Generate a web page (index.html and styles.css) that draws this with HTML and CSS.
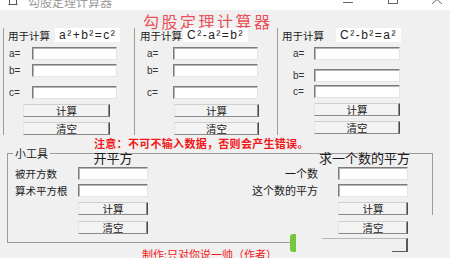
FILE: index.html
```html
<!DOCTYPE html>
<html lang="zh-CN">
<head>
<meta charset="utf-8">
<title>勾股定理计算器</title>
<link rel="stylesheet" href="styles.css">
</head>
<body>
<div class="window">
  <div class="titlebar">
    <div class="tb-inner">
      <svg class="tb-icon" width="14" height="16" viewBox="0 0 14 16">
        <path d="M3.5 3.5h4v2h3v5h-7z" fill="none" stroke="#555" stroke-width="1"/>
        <path d="M2.5 10.5h9" stroke="#555" stroke-width="1"/>
      </svg>
      <span class="tb-title">勾股定理计算器</span>
      <svg class="tb-ctrls" width="120" height="16" viewBox="0 0 120 16">
        <path d="M13 8.5h10" stroke="#666" stroke-width="1"/>
        <rect x="58.5" y="1.5" width="9" height="8" fill="none" stroke="#666" stroke-width="1"/>
        <path d="M102 1l10 9M112 1l-10 9" stroke="#666" stroke-width="1"/>
      </svg>
    </div>
  </div>

  <div class="client">
    <h1 class="apptitle">勾股定理计算器</h1>

    <div class="groups">
      <section class="grp g1">
        <div class="ghead"><span class="glabel">用于计算</span><span class="formula">a²+b²=c²</span></div>
        <div class="row r1"><span class="lbl">a=</span><input class="tb" type="text"></div>
        <div class="row r2"><span class="lbl">b=</span><input class="tb" type="text"></div>
        <div class="row r3"><span class="lbl">c=</span><input class="tb" type="text"></div>
        <button class="btn b1" type="button">计算</button>
        <button class="btn b2" type="button">清空</button>
      </section>
      <section class="grp g2">
        <div class="ghead"><span class="glabel">用于计算</span><span class="formula">C²-a²=b²</span></div>
        <div class="row r1"><span class="lbl">a=</span><input class="tb" type="text"></div>
        <div class="row r2"><span class="lbl">b=</span><input class="tb" type="text"></div>
        <div class="row r3"><span class="lbl">c=</span><input class="tb" type="text"></div>
        <button class="btn b1" type="button">计算</button>
        <button class="btn b2" type="button">清空</button>
      </section>
      <section class="grp g3">
        <div class="ghead"><span class="glabel">用于计算</span><span class="formula">C²-b²=a²</span></div>
        <div class="row r1"><span class="lbl">a=</span><input class="tb" type="text"></div>
        <div class="row r2"><span class="lbl">b=</span><input class="tb" type="text"></div>
        <div class="row r3"><span class="lbl">c=</span><input class="tb" type="text"></div>
        <button class="btn b1" type="button">计算</button>
        <button class="btn b2" type="button">清空</button>
      </section>
    </div>

    <p class="note">注意：不可不输入数据，否则会产生错误。</p>

    <div class="tools">
      <span class="legend">小工具</span>
      <div class="tcol tleft">
        <div class="thead">开平方</div>
        <span class="tlbl t1">被开方数</span><input class="tb t1" type="text">
        <span class="tlbl t2">算术平方根</span><input class="tb t2" type="text">
        <button class="btn t3" type="button">计算</button>
        <button class="btn t4" type="button">清空</button>
      </div>
      <div class="tcol tright">
        <div class="thead">求一个数的平方</div>
        <span class="tlbl t1">一个数</span><input class="tb t1" type="text">
        <span class="tlbl t2">这个数的平方</span><input class="tb t2" type="text">
        <button class="btn t3" type="button">计算</button>
        <button class="btn t4" type="button">清空</button>
      </div>
    </div>

    <p class="credit">制作:只对你说一帅（作者）</p>
  </div>

  <div class="ghost"></div>
  <div class="green"></div>
</div>
</body>
</html>
```

FILE: styles.css
```css
* { box-sizing: border-box; }

html, body {
  margin: 0;
  padding: 0;
  width: 450px;
  height: 258px;
  overflow: hidden;
  background: #f0f0f0;
}

body {
  font-family: "Noto Sans CJK SC", "Liberation Sans", sans-serif;
  color: #1a1a1a;
}

.window {
  position: relative;
  width: 450px;
  height: 258px;
  overflow: hidden;
}

/* ---------- title bar ---------- */
.titlebar {
  height: 10px;
  background: #ffffff;
  overflow: hidden;
}

.tb-inner {
  display: flex;
  align-items: center;
  height: 16px;
  margin-top: -6px;
}

.tb-icon { margin-left: 6px; flex: none; }

.tb-title {
  margin-left: 8px;
  font-size: 12px;
  line-height: 16px;
  color: #9a9a9a;
}

.tb-ctrls { margin-left: auto; flex: none; }

/* ---------- client ---------- */
.apptitle {
  margin: 2px 0 0 143px;
  height: 18px;
  font-size: 16px;
  line-height: 18px;
  font-weight: normal;
  letter-spacing: 2.5px;
  color: #ea5058;
  white-space: nowrap;
}

.groups {
  display: grid;
  grid-template-columns: 131px 143px 1fr;
  padding-left: 3px;
  margin-top: -2px;
}

.grp {
  border-left: 1px solid #9c9c9c;
  height: 107px;
}

.g1 { --hp: 4px; --hg: 5px; --lp: 5px; --lw: 23px; --iw: 85px; --bm: 19px; --bw: 87px; }
.g2 { --hp: 5px; --hg: 1px; --lp: 12px; --lw: 26px; --iw: 85px; --bm: 39px; --bw: 85px; }
.g3 { --hp: 4px; --hg: 12px; --lp: 15px; --lw: 21px; --iw: 86px; --bm: 36px; --bw: 86px; }

.ghead {
  display: flex;
  align-items: center;
  height: 14px;
  padding-left: var(--hp);
  gap: var(--hg);
}

.glabel {
  font-size: 10.5px;
  line-height: 14px;
  padding-top: 2px;
  white-space: nowrap;
}

.formula {
  background: #ffffff;
  height: 14px;
  padding: 0 4px;
  font-family: "Liberation Sans", sans-serif;
  font-size: 12px;
  line-height: 14px;
  letter-spacing: 1.5px;
  color: #222;
  white-space: nowrap;
}

.row {
  display: flex;
  align-items: center;
  padding-left: var(--lp);
  height: 13px;
}

.lbl {
  width: var(--lw);
  font-family: "Liberation Sans", sans-serif;
  font-size: 10px;
  color: #333;
}

.r1 { margin-top: 5px; }
.r2 { margin-top: 4px; }
.r3 { margin-top: 9px; }
.g3 .r2 { margin-top: 9px; }
.g3 .r3 { margin-top: 3px; }

.grp .tb { width: var(--iw); }

.tb {
  height: 13px;
  padding: 0;
  margin: 0;
  background: #ffffff;
  border: 1px solid;
  border-color: #7c7c7c #e4e4e4 #e4e4e4 #7c7c7c;
  box-shadow: inset 1px 1px 0 #b4b4b4;
  outline: none;
}

.btn {
  display: block;
  height: 13px;
  padding: 0;
  background: #f3f3f3;
  border: 1px solid;
  border-color: #cfcfcf #4a4a4a #8a8a8a #e6e6e6;
  box-shadow: inset -1px 0 0 #8c8c8c;
  font-family: "Noto Sans CJK SC", sans-serif;
  font-size: 10.5px;
  line-height: 11px;
  color: #222;
}

.grp .btn {
  margin-left: var(--bm);
  width: var(--bw);
}

.b1 { margin-top: 5px; }
.b2 { margin-top: 5px; }

/* ---------- note ---------- */
.note {
  margin: 2px 0 0 94px;
  font-size: 11px;
  line-height: 12px;
  font-weight: bold;
  letter-spacing: 0.3px;
  color: #f01818;
  white-space: nowrap;
}

/* ---------- tools ---------- */
.tools {
  position: relative;
  display: flex;
  margin: 4px 0 0 7px;
  width: 426px;
  height: 90px;
  border-top: 1px solid #9c9c9c;
  border-left: 1px solid #9c9c9c;
}

.tools::before {
  content: "";
  position: absolute;
  left: -1px;
  bottom: 0;
  width: 284px;
  height: 1px;
  background: #9c9c9c;
}

.tools::after {
  content: "";
  position: absolute;
  left: 424px;
  top: -1px;
  width: 1px;
  height: 62px;
  background: #9c9c9c;
}

.legend {
  position: absolute;
  left: 5px;
  top: -8px;
  padding: 0 2px;
  background: #f0f0f0;
  font-size: 11px;
  line-height: 14px;
  color: #222;
}

.tcol {
  display: grid;
  align-content: start;
  margin-top: -3px;
}

.tleft {
  margin-left: 7px;
  grid-template-columns: 63px 70px;
}

.tright {
  margin-left: 102px;
  grid-template-columns: 68px 70px;
  column-gap: 20px;
}

.thead {
  height: 14px;
  font-size: 13px;
  line-height: 14px;
  white-space: nowrap;
  color: #1a1a1a;
}

.tleft .thead { grid-column: 2; text-align: center; }
.tright .thead { grid-column: 1 / 3; text-align: right; margin-right: -2px; }

.tlbl {
  grid-column: 1;
  align-self: center;
  font-size: 10.5px;
  line-height: 13px;
  white-space: nowrap;
}

.tright .tlbl { font-size: 11px; text-align: right; }

.tcol .tb, .tcol .btn { grid-column: 2; width: 70px; }

.tcol .t1 { margin-top: 2px; }
.tcol .t2 { margin-top: 4px; }
.tcol .t3 { margin-top: 5px; }
.tcol .t4 { margin-top: 6px; }

.credit {
  margin: 5px 0 0 142px;
  font-size: 11px;
  line-height: 12px;
  color: #f01818;
  white-space: nowrap;
}

/* ---------- stray decorations ---------- */
.ghost {
  position: absolute;
  left: 322px;
  top: 238px;
  width: 86px;
  height: 14px;
  border-top: 1px solid #b8b8b8;
  border-right: 2px solid #5a5a5a;
}

.ghost::after {
  content: "";
  position: absolute;
  right: 0;
  bottom: 0;
  width: 14px;
  height: 1px;
  background: #5a5a5a;
}

.green {
  position: absolute;
  left: 290px;
  top: 234px;
  width: 6px;
  height: 18px;
  border-radius: 3px 0 0 3px;
  background: #74c73f;
}
```
